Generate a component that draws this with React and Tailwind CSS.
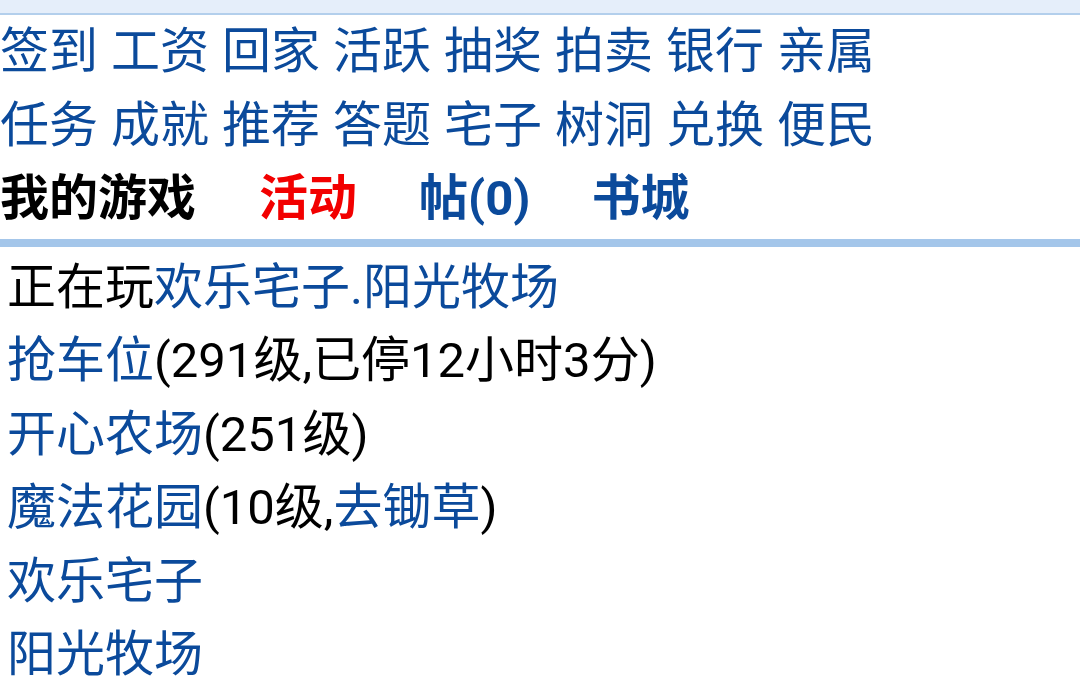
export default function App() {
  const row1 = ["签到", "工资", "回家", "活跃", "抽奖", "拍卖", "银行", "亲属"];
  const row2 = ["任务", "成就", "推荐", "答题", "宅子", "树洞", "兑换", "便民"];

  return (
    <div
      className="min-h-screen bg-white text-[49px] leading-[73.5px] text-black"
      style={{ fontFamily: 'Roboto, "Noto Sans CJK SC", sans-serif' }}
    >
      {/* Top band */}
      <div className="h-[15px] bg-[#e5eefa] border-b-2 border-[#b3cfec]" />

      {/* Nav links */}
      <div>
        <div className="flex gap-[13px] text-[#0b4a9b] whitespace-nowrap">
          {row1.map((t) => (
            <a key={t}>{t}</a>
          ))}
        </div>
        <div className="flex gap-[13px] text-[#0b4a9b] whitespace-nowrap">
          {row2.map((t) => (
            <a key={t}>{t}</a>
          ))}
        </div>
        <div className="flex font-bold whitespace-nowrap">
          <span className="text-black">我的游戏</span>
          <a className="ml-[63px] text-[#f20000]">活动</a>
          <a className="ml-[62px] text-[#0b4a9b]">帖(0)</a>
          <a className="ml-[61px] text-[#0b4a9b]">书城</a>
        </div>
      </div>

      {/* Separator */}
      <div className="mt-[3px] h-[8px] bg-[#a4c6ea]" />

      {/* Game list */}
      <div className="pl-[7px] pt-[4px] whitespace-nowrap">
        <div>
          正在玩<a className="text-[#0b4a9b]">欢乐宅子.阳光牧场</a>
        </div>
        <div>
          <a className="text-[#0b4a9b]">抢车位</a>(291级,已停12小时3分)
        </div>
        <div>
          <a className="text-[#0b4a9b]">开心农场</a>(251级)
        </div>
        <div>
          <a className="text-[#0b4a9b]">魔法花园</a>(10级,
          <a className="text-[#0b4a9b]">去锄草</a>)
        </div>
        <div>
          <a className="text-[#0b4a9b]">欢乐宅子</a>
        </div>
        <div>
          <a className="text-[#0b4a9b]">阳光牧场</a>
        </div>
      </div>
    </div>
  );
}
